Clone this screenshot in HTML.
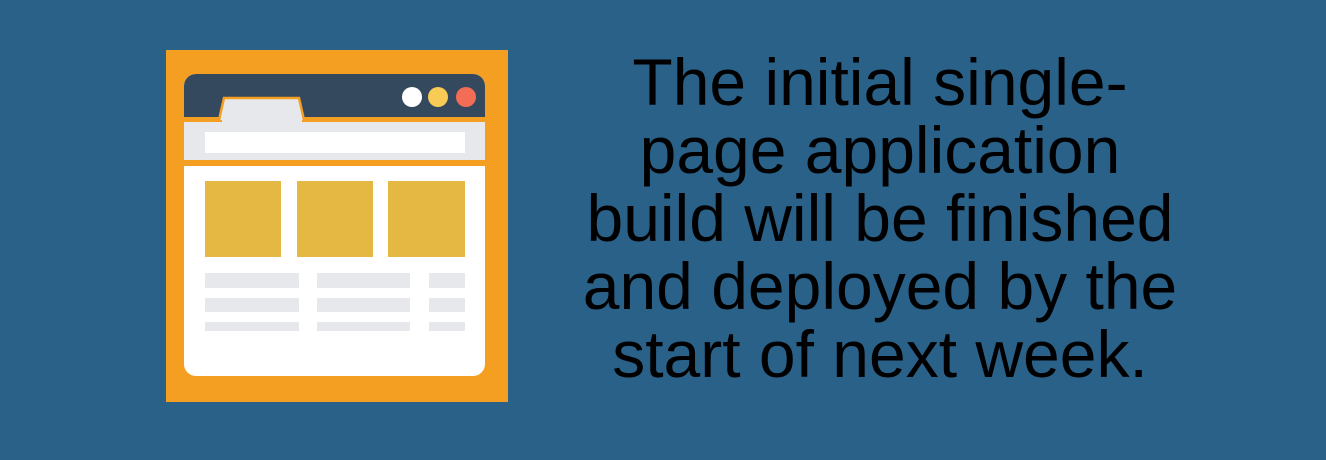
<!DOCTYPE html>
<html><head><meta charset="utf-8"><style>
html,body{margin:0;padding:0}
body{width:1326px;height:460px;background:#2a6189;position:relative;overflow:hidden}
.t{position:absolute;left:580px;width:600px;top:48px;text-align:center;font-family:"Liberation Sans",sans-serif;font-size:66px;line-height:68px;color:#000}
</style></head><body>
<svg width="1326" height="460" style="position:absolute;left:0;top:0">
<rect x="166" y="50" width="342" height="352" fill="#f49f22"/>
<rect x="184" y="74" width="301" height="302" rx="12" fill="#fff"/>
<path d="M184 117 V86 a12 12 0 0 1 12 -12 H473 a12 12 0 0 1 12 12 V117 Z" fill="#34495e"/>
<rect x="184" y="117" width="301" height="5" fill="#f49f22"/>
<rect x="184" y="122" width="301" height="38" fill="#e6e8ec"/>
<path d="M219 120 L224 98 H299 L304 120" fill="#e6e8ec" stroke="#f49f22" stroke-width="2.5"/>
<rect x="222" y="117" width="80" height="6" fill="#e6e8ec"/>
<rect x="184" y="160" width="301" height="6" fill="#f49f22"/>
<rect x="205" y="132" width="260" height="21" fill="#fff"/>
<circle cx="412" cy="97" r="10" fill="#fff"/>
<circle cx="438" cy="97" r="10" fill="#f7cb55"/>
<circle cx="466" cy="97" r="10" fill="#f26c56"/>
<g fill="#e5b844">
<rect x="205" y="181" width="76" height="76"/>
<rect x="297" y="181" width="76" height="76"/>
<rect x="388" y="181" width="77" height="76"/>
</g>
<g fill="#e6e8ec">
<rect x="205" y="273" width="94" height="15"/><rect x="317" y="273" width="93" height="15"/><rect x="429" y="273" width="36" height="15"/>
<rect x="205" y="298" width="94" height="14"/><rect x="317" y="298" width="93" height="14"/><rect x="429" y="298" width="36" height="14"/>
<rect x="205" y="322" width="94" height="9"/><rect x="317" y="322" width="93" height="9"/><rect x="429" y="322" width="36" height="9"/>
</g>
</svg>
<div class="t">The initial single-<br>page application<br>build will be finished<br>and deployed by the<br>start of next week.</div>
</body></html>
